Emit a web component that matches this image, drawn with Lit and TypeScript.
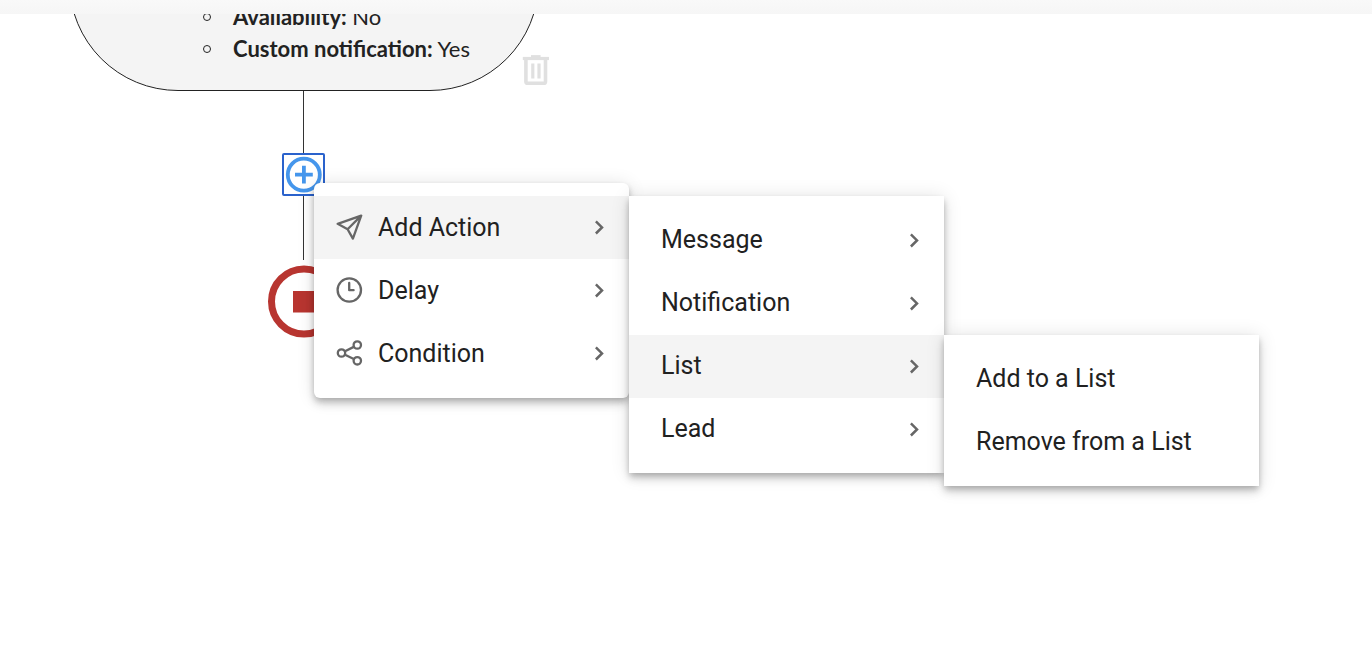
import { LitElement, html, css, svg, nothing, TemplateResult } from "lit";
import { customElement } from "lit/decorators.js";
import { classMap } from "lit/directives/class-map.js";

interface MenuEntry {
  label: string;
  icon?: TemplateResult;
  open?: boolean;
  children?: MenuEntry[];
}

const sendIcon = svg`<path d="M1.7 9.8 25.2 1.6 16.9 24.6 11.6 15.2Z M11.6 15.2 25.2 1.6"/>`;
const clockIcon = svg`<circle cx="13.3" cy="13" r="11.7"/><path d="M13.2 6V13.2H17.6"/>`;
const shareIcon = svg`<circle cx="5.5" cy="13" r="3.7"/><circle cx="21.3" cy="5" r="3.7"/><circle cx="21.3" cy="20.8" r="3.7"/><path d="M9 11.2 17.8 6.9M9 14.8 17.8 19"/>`;

const entries: MenuEntry[] = [
  {
    label: "Add Action",
    icon: sendIcon,
    open: true,
    children: [
      { label: "Message", children: [] },
      { label: "Notification", children: [] },
      {
        label: "List",
        open: true,
        children: [{ label: "Add to a List" }, { label: "Remove from a List" }],
      },
      { label: "Lead", children: [] },
    ],
  },
  { label: "Delay", icon: clockIcon, children: [] },
  { label: "Condition", icon: shareIcon, children: [] },
];

@customElement("flow-menu")
export class FlowMenu extends LitElement {
  static styles = css`
    :host {
      display: block;
      font-family: Roboto, "Liberation Sans", sans-serif;
    }
    .menu {
      box-sizing: border-box;
      width: 315px;
      margin: 0;
      padding: 13px 0 12px;
      list-style: none;
      background: #fff;
      box-shadow: 0 3px 6px -1px rgba(0, 0, 0, 0.2), 0 6px 8px 0 rgba(0, 0, 0, 0.14),
        0 1px 18px 0 rgba(0, 0, 0, 0.12);
    }
    .root {
      padding-bottom: 13px;
      border-radius: 6px;
    }
    .entry {
      position: relative;
    }
    .entry > .menu {
      position: absolute;
      top: 0;
      left: 100%;
    }
    .item {
      display: flex;
      align-items: center;
      box-sizing: border-box;
      width: 100%;
      height: 63px;
      padding: 0 24px 0 32px;
      border: 0;
      background: none;
      color: #212121;
      font: 400 25px/32px Roboto, "Liberation Sans", sans-serif;
      text-align: left;
      cursor: pointer;
    }
    .root > .entry > .item {
      padding-left: 22px;
    }
    .open {
      background: #f4f4f4;
    }
    .icon {
      width: 27px;
      height: 27px;
      margin-right: 15px;
      fill: none;
      stroke: #666;
      stroke-width: 2.3;
      stroke-linejoin: round;
      stroke-linecap: round;
    }
    .label {
      flex: 1;
    }
    .menu .menu .label {
      padding-bottom: 2px;
    }
    .chevron {
      width: 12px;
      height: 15px;
      fill: none;
      stroke: #666;
      stroke-width: 2.5;
    }
  `;

  private renderMenu(list: MenuEntry[], root = false): TemplateResult {
    return html`<ul class=${classMap({ menu: true, root })} role="menu">
      ${list.map(
        (e) => html`<li class="entry" role="none">
          <button class=${classMap({ item: true, open: !!e.open })} role="menuitem">
            ${e.icon ? html`<svg class="icon" viewBox="0 0 27 27" aria-hidden="true">${e.icon}</svg>` : nothing}
            <span class="label">${e.label}</span>
            ${e.children
              ? html`<svg class="chevron" viewBox="0 0 12 15" aria-hidden="true"><path d="M2.9 1.3 9 7.4 2.9 13.5" /></svg>`
              : nothing}
          </button>
          ${e.open && e.children ? this.renderMenu(e.children) : nothing}
        </li>`
      )}
    </ul>`;
  }

  render() {
    return this.renderMenu(entries, true);
  }
}

@customElement("app-root")
export class AppRoot extends LitElement {
  static styles = css`
    :host {
      display: flex;
      flex-direction: column;
      min-height: 100vh;
      background: #fff;
      font-family: Lato, "Open Sans", sans-serif;
      color: #222;
    }
    .bar {
      flex: none;
      height: 14px;
      background: linear-gradient(#f9f9f9, #f6f6f6);
    }
    .canvas {
      position: relative;
      flex: 1;
      overflow: hidden;
    }
    .card,
    .line,
    .trash,
    .add,
    .stop,
    .popup {
      position: absolute;
    }
    .card {
      box-sizing: border-box;
      left: 69px;
      top: -182px;
      width: 470px;
      height: 259px;
      padding-bottom: 25px;
      display: flex;
      align-items: flex-end;
      border: 1px solid #222;
      border-radius: 109px;
      background: #f4f4f4;
    }
    .facts {
      margin: 0;
      padding-left: 133px;
      list-style: none;
      font-size: 22px;
      line-height: 32px;
    }
    .fact {
      display: flex;
      align-items: center;
      gap: 22px;
      white-space: pre;
    }
    .dot {
      box-sizing: border-box;
      width: 8px;
      height: 8px;
      border: 1px solid #222;
      border-radius: 50%;
    }
    .line {
      left: 303px;
      top: 77px;
      width: 1px;
      height: 169px;
      background: #333;
    }
    button {
      padding: 0;
      border: 0;
      background: none;
      cursor: pointer;
    }
    svg {
      display: block;
    }
    .trash {
      left: 522px;
      top: 40px;
    }
    .add {
      left: 282px;
      top: 139px;
      border: 2px solid #2a62cc;
      border-radius: 2px;
      background: #fff;
    }
    .stop {
      left: 267px;
      top: 251px;
    }
    .popup {
      left: 314px;
      top: 169px;
    }
  `;

  render() {
    return html`
      <header class="bar"></header>
      <main class="canvas">
        <section class="card">
          <ul class="facts">
            <li class="fact"><span class="dot"></span><span><b>Availability:</b> No</span></li>
            <li class="fact"><span class="dot"></span><span><b>Custom notification:</b> Yes</span></li>
          </ul>
        </section>
        <div class="line"></div>
        <button class="trash" aria-label="Delete">
          <svg width="28" height="32" viewBox="0 0 28 32" fill="none" stroke="#e0e0e0">
            <path d="M0.8 4.5H27" stroke-width="3.2" />
            <path d="M9 2.4H18.6" stroke-width="2.6" />
            <path d="M3.9 5V27.4Q3.9 29.2 5.7 29.2H21.7Q23.5 29.2 23.5 27.4V5" stroke-width="3.6" />
            <path d="M10.8 9.5V24.5M17 9.5V24.5" stroke-width="3.2" />
          </svg>
        </button>
        <button class="add" aria-label="Add step">
          <svg width="39" height="39" viewBox="0 0 39 39" fill="none" stroke="#4596ec" stroke-width="3.8">
            <circle cx="19.8" cy="19.7" r="16" />
            <path d="M11 19.7H28.8M19.9 10.8V28.6" />
          </svg>
        </button>
        <svg class="stop" width="73" height="73" viewBox="0 0 73 73" role="img" aria-label="End">
          <circle cx="37" cy="36.5" r="32.5" fill="#fff" stroke="#b83530" stroke-width="7" />
          <rect x="26" y="26" width="22" height="21.5" fill="#b83530" />
        </svg>
        <flow-menu class="popup"></flow-menu>
      </main>
    `;
  }
}
